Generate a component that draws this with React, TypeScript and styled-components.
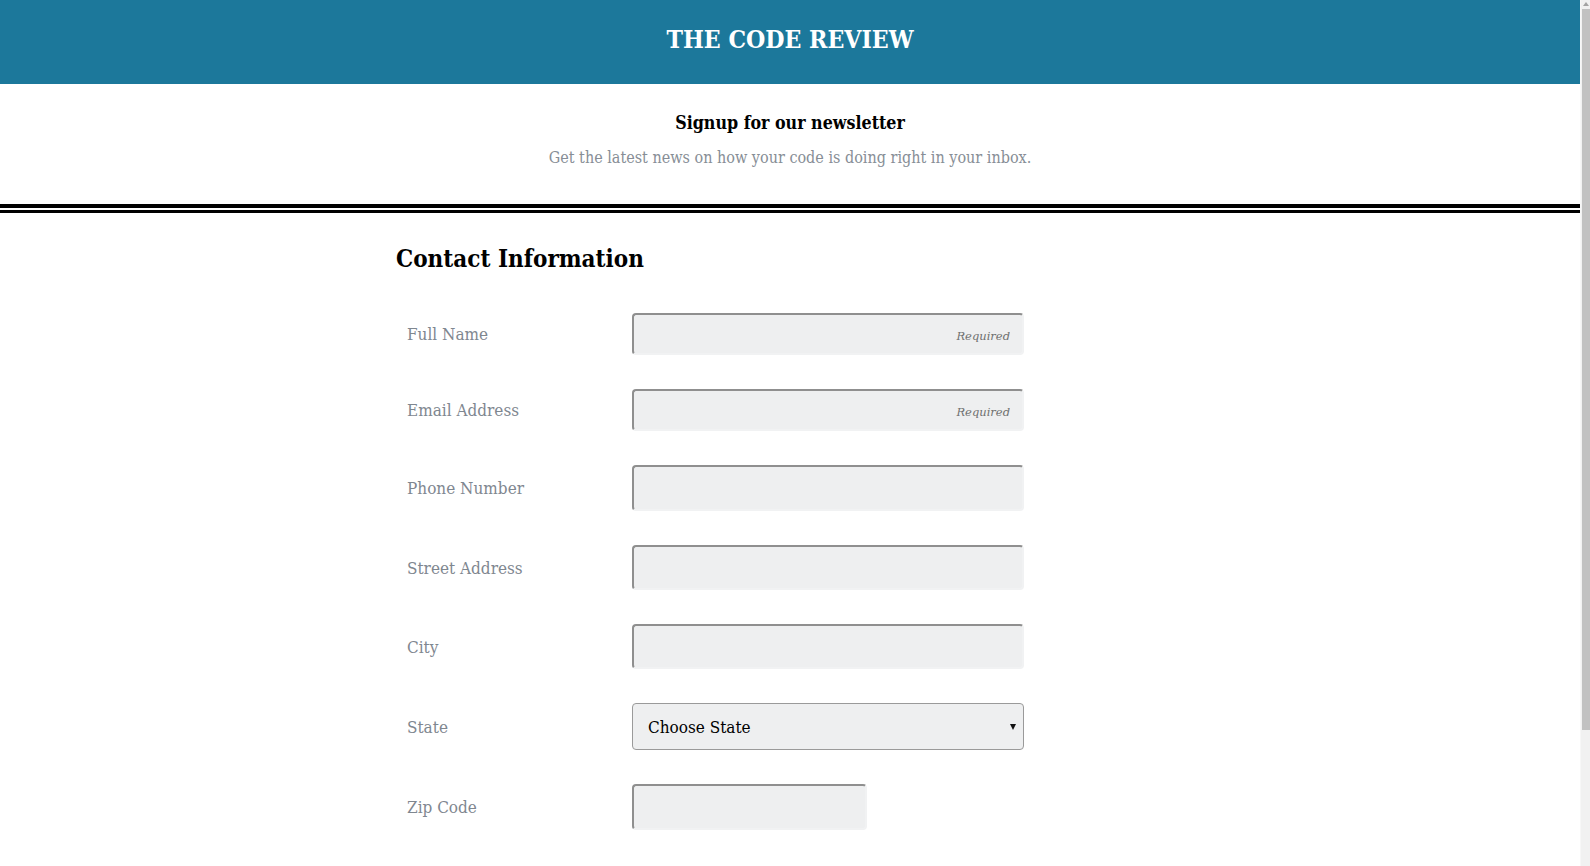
import React from "react";
import styled, { createGlobalStyle } from "styled-components";

const Global = createGlobalStyle`
  html, body { margin: 0; padding: 0; background: #fff; overflow: hidden; }
  body { font-family: "DejaVu Serif", "Liberation Serif", serif; font-stretch: condensed; color: #000; }
`;

const Viewport = styled.div`
  height: 100vh;
  display: flex;
  overflow: hidden;
`;

const Main = styled.main`
  flex: 1;
  min-width: 0;
  overflow: hidden;
`;

const ScrollTrack = styled.div`
  width: 10px;
  flex: none;
  background: #f1f1f1;
  display: flex;
  flex-direction: column;
  align-items: flex-end;
  border-left: 1px solid #f7f7f7;
  box-sizing: border-box;
`;

const ScrollArrow = styled.svg`
  width: 8px;
  height: 9px;
  flex: none;
`;

const ScrollThumb = styled.div`
  width: 8px;
  height: 721px;
  background: #c1c1c1;
`;

const Page = styled.div`
  display: flex;
  flex-direction: column;
  padding-bottom: 200px;
`;

const Header = styled.header`
  height: 84px;
  background: #1c789b;
  display: flex;
  align-items: center;
  justify-content: center;
  padding-bottom: 4px;
  box-sizing: border-box;
`;

const Title = styled.h1`
  margin: 0;
  color: #fff;
  font-size: 24.6px;
  font-weight: 700;
  line-height: 32px;
`;

const Intro = styled.section`
  display: flex;
  flex-direction: column;
  align-items: center;
  padding: 27px 0 34px;
  gap: 11px;
`;

const IntroTitle = styled.h2`
  margin: 0;
  font-size: 17.7px;
  font-weight: 700;
  line-height: 24px;
`;

const IntroText = styled.p`
  margin: 0;
  font-size: 16px;
  line-height: 24px;
  color: #878e96;
`;

const Divider = styled.hr`
  margin: 0;
  border: none;
  border-top: 4px solid #000;
  border-bottom: 3px solid #000;
  height: 2px;
  background: #fff;
`;

const Form = styled.form`
  width: 788px;
  margin: 0 auto;
  display: flex;
  flex-direction: column;
`;

const Heading = styled.h3`
  margin: 30px 0 38px;
  font-size: 24px;
  line-height: 32px;
  font-weight: 700;
`;

const Rows = styled.div`
  display: flex;
  flex-direction: column;
  gap: 34px;
`;

const Row = styled.div<{ $h: number }>`
  display: grid;
  grid-template-columns: 236px auto;
  align-items: center;
  height: ${(p) => p.$h}px;
`;

const Label = styled.label`
  padding-left: 11px;
  font-size: 17px;
  color: #7f8790;
`;

const Input = styled.input<{ $w?: number }>`
  box-sizing: border-box;
  width: ${(p) => p.$w ?? 392}px;
  height: 100%;
  background: #eeeff0;
  border: 2px solid #f1f2f3;
  border-top-color: #8f8f8f;
  border-left-color: #8f8f8f;
  border-radius: 4px;
  padding: 0 12px;
  font-family: inherit;
  font-size: 16px;
  text-align: right;
  outline: none;
  &::placeholder {
    font-style: italic;
    font-size: 11.5px;
    color: #6f6f6f;
  }
`;

const SelectWrap = styled.div`
  position: relative;
  width: 392px;
  height: 100%;
`;

const Select = styled.select`
  box-sizing: border-box;
  appearance: none;
  width: 100%;
  height: 100%;
  background: #eeeff0;
  border: 1px solid #9a9a9a;
  border-radius: 4px;
  padding: 0 15px;
  font-family: inherit;
  font-stretch: condensed;
  font-size: 17px;
  color: #000;
  outline: none;
`;

const Arrow = styled.span`
  position: absolute;
  right: 8px;
  top: 50%;
  margin-top: -3px;
  width: 0;
  height: 0;
  border-left: 3px solid transparent;
  border-right: 3px solid transparent;
  border-top: 6px solid #111;
  pointer-events: none;
`;

const fields: { label: string; h: number; required?: boolean }[] = [
  { label: "Full Name", h: 42, required: true },
  { label: "Email Address", h: 42, required: true },
  { label: "Phone Number", h: 46 },
  { label: "Street Address", h: 45 },
  { label: "City", h: 45 },
];

export default function App() {
  return (
    <Viewport>
      <Global />
      <Main>
        <Page>
          <Header>
            <Title>THE CODE REVIEW</Title>
          </Header>
          <Intro>
            <IntroTitle>Signup for our newsletter</IntroTitle>
            <IntroText>Get the latest news on how your code is doing right in your inbox.</IntroText>
          </Intro>
          <Divider />
          <Form onSubmit={(e) => e.preventDefault()}>
            <Heading>Contact Information</Heading>
            <Rows>
              {fields.map((f) => (
                <Row key={f.label} $h={f.h}>
                  <Label>{f.label}</Label>
                  <Input placeholder={f.required ? "Required" : ""} />
                </Row>
              ))}
              <Row $h={47}>
                <Label>State</Label>
                <SelectWrap>
                  <Select defaultValue="">
                    <option value="">Choose State</option>
                    <option>Alabama</option>
                    <option>Alaska</option>
                  </Select>
                  <Arrow />
                </SelectWrap>
              </Row>
              <Row $h={46}>
                <Label>Zip Code</Label>
                <Input $w={235} />
              </Row>
            </Rows>
          </Form>
        </Page>
      </Main>
      <ScrollTrack aria-hidden="true">
        <ScrollArrow viewBox="0 0 8 9">
          <path d="M4 2 L7 6 L1 6 Z" fill="#a3a3a3" />
        </ScrollArrow>
        <ScrollThumb />
      </ScrollTrack>
    </Viewport>
  );
}
